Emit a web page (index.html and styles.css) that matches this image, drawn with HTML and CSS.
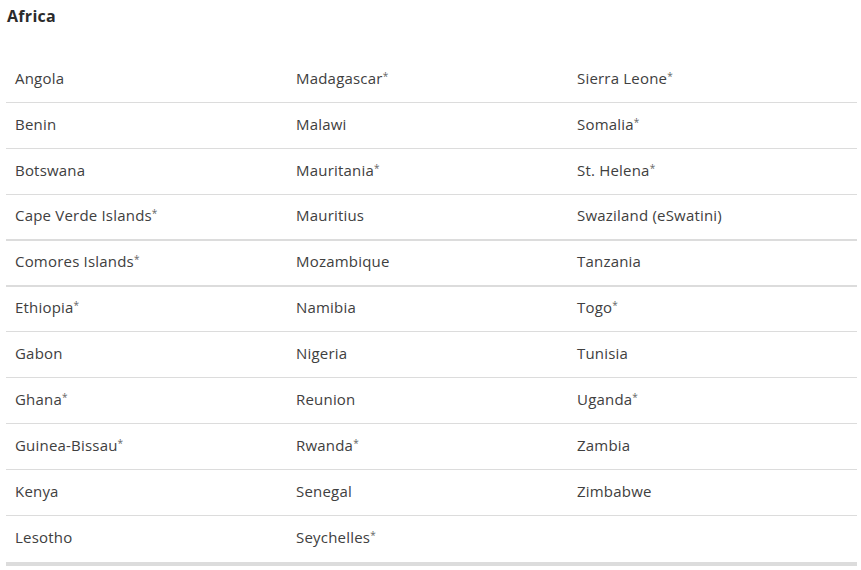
FILE: index.html
```html
<!DOCTYPE html>
<html>
<head>
<meta charset="utf-8">
<link rel="stylesheet" href="styles.css">
</head>
<body>
<div class="page">
  <h2 class="title">Africa</h2>
  <div class="table">
    <div class="row"><div class="cell">Angola</div><div class="cell">Madagascar<span class="ast">*</span></div><div class="cell">Sierra Leone<span class="ast">*</span></div></div>
    <div class="row"><div class="cell">Benin</div><div class="cell">Malawi</div><div class="cell">Somalia<span class="ast">*</span></div></div>
    <div class="row"><div class="cell">Botswana</div><div class="cell">Mauritania<span class="ast">*</span></div><div class="cell">St. Helena<span class="ast">*</span></div></div>
    <div class="row thick"><div class="cell">Cape Verde Islands<span class="ast">*</span></div><div class="cell">Mauritius</div><div class="cell">Swaziland (eSwatini)</div></div>
    <div class="row thick"><div class="cell">Comores Islands<span class="ast">*</span></div><div class="cell">Mozambique</div><div class="cell">Tanzania</div></div>
    <div class="row short"><div class="cell">Ethiopia<span class="ast">*</span></div><div class="cell">Namibia</div><div class="cell">Togo<span class="ast">*</span></div></div>
    <div class="row"><div class="cell">Gabon</div><div class="cell">Nigeria</div><div class="cell">Tunisia</div></div>
    <div class="row"><div class="cell">Ghana<span class="ast">*</span></div><div class="cell">Reunion</div><div class="cell">Uganda<span class="ast">*</span></div></div>
    <div class="row"><div class="cell">Guinea-Bissau<span class="ast">*</span></div><div class="cell">Rwanda<span class="ast">*</span></div><div class="cell">Zambia</div></div>
    <div class="row"><div class="cell">Kenya</div><div class="cell">Senegal</div><div class="cell">Zimbabwe</div></div>
    <div class="row last"><div class="cell">Lesotho</div><div class="cell">Seychelles<span class="ast">*</span></div><div class="cell"></div></div>
  </div>
</div>
</body>
</html>
```

FILE: styles.css
```css
html, body {
  margin: 0;
  padding: 0;
  background: #fff;
}
.page {
  padding: 0 4px 0 6px;
  font-family: "Open Sans", "Liberation Sans", sans-serif;
  color: #404040;
}
.title {
  margin: 0;
  padding: 5px 0 0 1px;
  height: 57px;
  box-sizing: border-box;
  font-size: 16px;
  font-weight: 700;
  letter-spacing: 0.3px;
  line-height: 22px;
  color: #2b2b2b;
}
.table {
  width: 851px;
}
.row {
  display: grid;
  grid-template-columns: 281px 281px 289px;
  height: 46px;
  box-sizing: border-box;
  border-bottom: 1px solid #dcdcdc;
  align-items: center;
}
.row.thick {
  border-bottom-width: 2px;
}
.row.short {
  height: 45px;
}
.row.last {
  height: 50px;
  border-bottom-width: 4px;
}
.cell {
  padding: 0 0 4px 9px;
  font-size: 15px;
  letter-spacing: 0.2px;
  line-height: 20px;
}
.ast {
  font-size: 10px;
  vertical-align: 4px;
  line-height: 0;
  color: #666;
}
```
